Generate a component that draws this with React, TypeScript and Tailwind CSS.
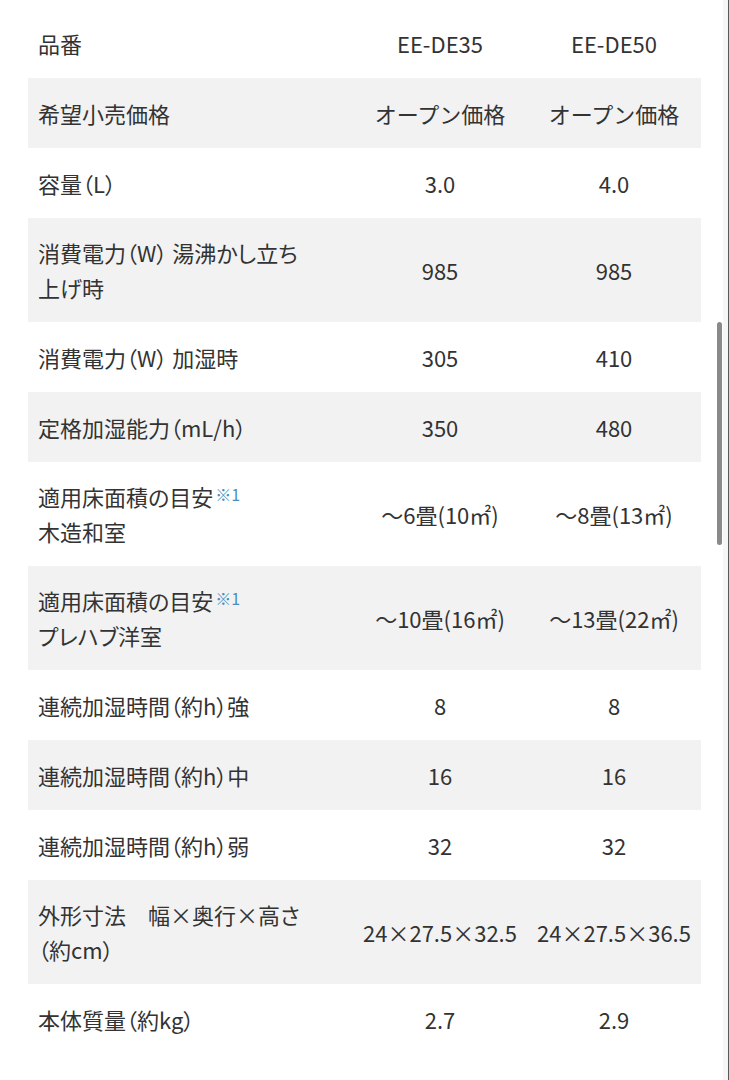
import React from "react";

type Row = {
  label: React.ReactNode;
  a: string;
  b: string;
  tall?: boolean;
};

const note = <span className="ml-[2px] align-[5px] text-[16px] leading-none text-[#4a8fbf]">※1</span>;

const rows: Row[] = [
  { label: "品番", a: "EE-DE35", b: "EE-DE50" },
  { label: "希望小売価格", a: "オープン価格", b: "オープン価格" },
  { label: "容量（L）", a: "3.0", b: "4.0" },
  {
    label: (
      <>
        消費電力（W） 湯沸かし立ち
        <br />
        上げ時
      </>
    ),
    a: "985",
    b: "985",
    tall: true,
  },
  { label: "消費電力（W） 加湿時", a: "305", b: "410" },
  { label: "定格加湿能力（mL/h）", a: "350", b: "480" },
  {
    label: (
      <>
        適用床面積の目安{note}
        <br />
        木造和室
      </>
    ),
    a: "〜6畳(10㎡)",
    b: "〜8畳(13㎡)",
    tall: true,
  },
  {
    label: (
      <>
        適用床面積の目安{note}
        <br />
        プレハブ洋室
      </>
    ),
    a: "〜10畳(16㎡)",
    b: "〜13畳(22㎡)",
    tall: true,
  },
  { label: "連続加湿時間（約h）強", a: "8", b: "8" },
  { label: "連続加湿時間（約h）中", a: "16", b: "16" },
  { label: "連続加湿時間（約h）弱", a: "32", b: "32" },
  {
    label: (
      <>
        外形寸法　幅×奥行×高さ
        <br />
        （約cm）
      </>
    ),
    a: "24×27.5×32.5",
    b: "24×27.5×36.5",
    tall: true,
  },
  { label: "本体質量（約kg）", a: "2.7", b: "2.9" },
];

export default function App() {
  return (
    <div
      className="flex h-[1080px] w-[729px] overflow-hidden bg-white text-[#333]"
      style={{ fontFamily: '"Noto Sans CJK JP", "Noto Sans", sans-serif' }}
    >
      <div className="w-[717px] pl-[28px] pr-[16px] pt-[8px]">
        <div className="flex flex-col">
          {rows.map((row, i) => (
            <div
              key={i}
              className={`flex items-center text-[22px] leading-[35px] ${row.tall ? "h-[104px]" : "h-[70px]"} ${
                i % 2 === 1 ? "bg-[#f2f2f2]" : "bg-white"
              }`}
            >
              <div className="w-[325px] pl-[10px] [font-feature-settings:'palt']">{row.label}</div>
              <div className="w-[174px] text-center whitespace-nowrap">{row.a}</div>
              <div className="w-[174px] text-center whitespace-nowrap">{row.b}</div>
            </div>
          ))}
        </div>
      </div>
      <div className="flex w-[12px]">
        <div className="w-[6px]">
          <div className="mt-[322px] h-[223px] w-[5px] rounded-full bg-[#8a8a8a]" />
        </div>
        <div className="w-[5px] bg-[#f6f6f6]" />
        <div className="w-px bg-[#5a5a5a]" />
      </div>
    </div>
  );
}
